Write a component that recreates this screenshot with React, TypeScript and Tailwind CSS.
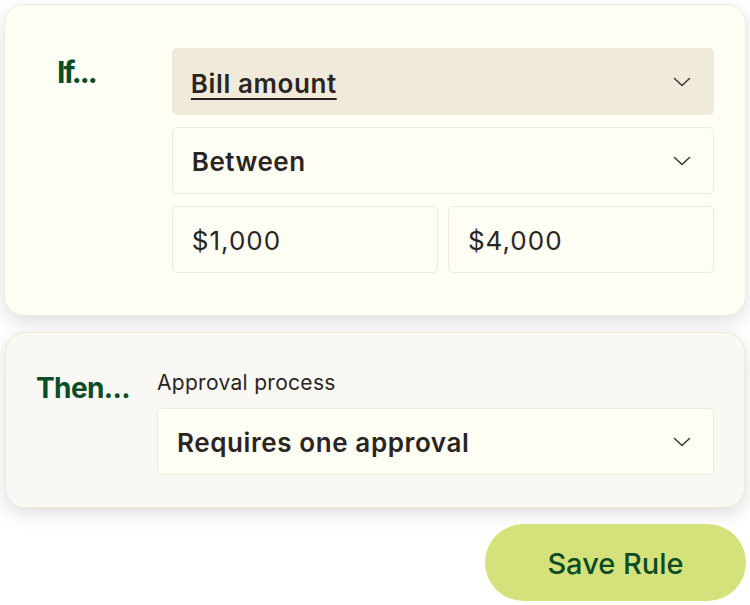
import React from "react";

const Chevron = () => (
  <svg width="18" height="10" viewBox="0 0 18 10" fill="none" className="shrink-0">
    <path d="M1.5 1.5 L9 8.5 L16.5 1.5" stroke="#3f3b37" strokeWidth="1.6" strokeLinecap="round" strokeLinejoin="round" />
  </svg>
);

export default function App() {
  return (
    <div className="w-[750px] h-[605px] bg-white overflow-hidden relative" style={{ fontFamily: "Inter, 'Open Sans', sans-serif" }}>
      <div className="pt-[4px] pl-[4px] pr-[4px]">
        {/* If card */}
        <div className="w-[742px] h-[312px] rounded-[20px] bg-[#fffef5] border border-[#f1ecdb] shadow-[0_6px_18px_rgba(0,0,0,0.13)] flex pt-[43px] pl-[52px] pr-[31px]">
          <div className="w-[115px] text-[30px] leading-[34px] font-bold text-[#0b4d27] tracking-[-2px] pt-[7px]">
            If...
          </div>
          <div className="flex flex-col gap-[12px] w-[543px]">
            <div className="h-[67px] rounded-[5px] bg-[#f0eadb] flex items-center justify-between pl-[19px] pr-[23px]">
              <span className="pt-[3px] text-[26px] font-semibold text-[#2a2523] tracking-[0.6px] underline underline-offset-[5px] decoration-[2px]">Bill amount</span>
              <Chevron />
            </div>
            <div className="h-[67px] rounded-[5px] bg-[#fffef5] border border-[#f0ead9] flex items-center justify-between pl-[19px] pr-[22px]">
              <span className="pt-[2px] text-[26px] font-semibold text-[#2a2523] tracking-[0.5px]">Between</span>
              <Chevron />
            </div>
            <div className="flex gap-[10px]">
              <div className="h-[67px] flex-1 rounded-[5px] bg-[#fffef5] border border-[#f0ead9] flex items-center pl-[19px]">
                <span className="pt-[2px] text-[26px] text-[#2a2523] tracking-[1px]">$1,000</span>
              </div>
              <div className="h-[67px] flex-1 rounded-[5px] bg-[#fffef5] border border-[#f0ead9] flex items-center pl-[19px]">
                <span className="pt-[2px] text-[26px] text-[#2a2523] tracking-[1px]">$4,000</span>
              </div>
            </div>
          </div>
        </div>

        {/* Then card */}
        <div className="mt-[16px] ml-[1px] w-[740px] h-[176px] rounded-[20px] bg-[#f9f8f4] border border-[#efe9d4] shadow-[0_6px_18px_rgba(0,0,0,0.13)] flex pt-[36px] pl-[30px] pr-[30px]">
          <div className="w-[121px] text-[28px] leading-[34px] font-bold text-[#0b4d27] tracking-[-0.6px] pt-[2px]">Then...</div>
          <div className="flex flex-col w-[557px]">
            <div className="text-[21px] leading-[26px] text-[#2a2523] tracking-[0.3px] mb-[12px] pt-[1px]">Approval process</div>
            <div className="h-[67px] rounded-[5px] bg-[#fffef5] border border-[#f0ead9] flex items-center justify-between pl-[19px] pr-[22px]">
              <span className="pt-[2px] text-[26px] font-semibold text-[#2a2523] tracking-[0.6px]">Requires one approval</span>
              <Chevron />
            </div>
          </div>
        </div>

        <div className="flex justify-end mt-[16px]">
          <button className="w-[261px] h-[77px] rounded-full bg-[#d5e17b] text-[29px] text-[#0b4d27] font-medium pt-[2px]">
            Save Rule
          </button>
        </div>
      </div>
    </div>
  );
}
